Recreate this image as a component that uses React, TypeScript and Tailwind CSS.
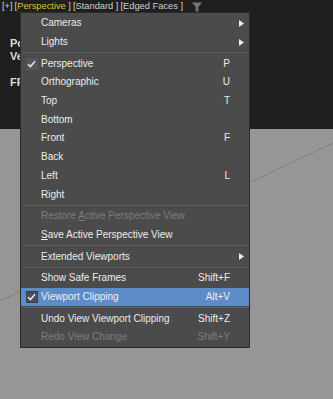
import React from "react";

type Item =
  | { sep: true }
  | {
      sep?: false;
      label: React.ReactNode;
      key?: string;
      sub?: boolean;
      checked?: boolean;
      disabled?: boolean;
      active?: boolean;
    };

const items: Item[] = [
  { label: "Cameras", sub: true },
  { label: "Lights", sub: true },
  { sep: true },
  { label: "Perspective", key: "P", checked: true },
  { label: "Orthographic", key: "U" },
  { label: "Top", key: "T" },
  { label: "Bottom" },
  { label: "Front", key: "F" },
  { label: "Back" },
  { label: "Left", key: "L" },
  { label: "Right" },
  { sep: true },
  {
    label: (
      <>
        Restore <span className="underline">A</span>ctive Perspective View
      </>
    ),
    disabled: true,
  },
  {
    label: (
      <>
        <span className="underline">S</span>ave Active Perspective View
      </>
    ),
  },
  { sep: true },
  { label: "Extended Viewports", sub: true },
  { sep: true },
  { label: "Show Safe Frames", key: "Shift+F" },
  { label: "Viewport Clipping", key: "Alt+V", checked: true, active: true },
  { sep: true },
  { label: "Undo View Viewport Clipping", key: "Shift+Z" },
  { label: "Redo View Change", key: "Shift+Y", disabled: true },
];

function Check({ active }: { active?: boolean }) {
  return (
    <div
      className={
        "w-[12px] h-[12px] flex items-center justify-center " +
        (active ? "bg-[#4a4f57] border border-[#3a3f47]" : "bg-[#555]")
      }
    >
      <svg width="9" height="8" viewBox="0 0 9 8">
        <path d="M1 4.2 L3.4 6.6 L8 1.2" fill="none" stroke="#e4e4e4" strokeWidth="1.6" />
      </svg>
    </div>
  );
}

function Menu() {
  return (
    <div className="absolute left-[20px] top-[12px] w-[230px] bg-[#4b4b4b] border border-[#2b2b2b] pt-[1px]">
      {items.map((it, i) =>
        it.sep ? (
          <div key={i} className="h-[3px] flex items-center pl-[2px] pr-[1px]">
            <div className="h-px w-full bg-[#5f5f5f]" />
          </div>
        ) : (
          <div
            key={i}
            className={
              "h-[18.7px] flex items-center pr-[19px] " +
              (it.active ? "bg-[#5d8cc9] " : "") +
              (it.disabled ? "text-[#7c7c7c]" : "text-[#ececec]")
            }
          >
            <div className="w-[20px] flex justify-center pl-[1px]">{it.checked && <Check active={it.active} />}</div>
            <span className="flex-1 whitespace-nowrap">{it.label}</span>
            {it.key && <span className="whitespace-nowrap">{it.key}</span>}
            {it.sub && (
              <svg width="5" height="7" viewBox="0 0 5 7" className="mr-[-14px] ml-auto">
                <polygon points="0,0 5,3.5 0,7" fill="#e6edf7" />
              </svg>
            )}
          </div>
        )
      )}
    </div>
  );
}

export default function App() {
  return (
    <div
      className="relative w-[333px] h-[399px] overflow-hidden bg-[#969696] text-[10px] leading-none"
      style={{ fontFamily: '"Liberation Sans", Arial, sans-serif' }}
    >
      <div className="h-[129px] bg-[#1f1f1f] flex flex-col">
        <div className="h-[13px] flex items-center pl-[2px] gap-[2px] text-[#cfcfcf] text-[9.3px]">
          <span>[+]</span>
          <span>
            [<span className="text-[#d9c531]">Perspective</span> ]
          </span>
          <span>[Standard ]</span>
          <span>[Edged Faces ]</span>
          <svg width="10" height="10" viewBox="0 0 11 10" className="ml-[7px]">
            <polygon points="0,0 11,0 7,5 7,10 4,10 4,5" fill="#777" />
          </svg>
        </div>
        <div className="pl-[10px] pt-[25px] font-bold text-[#dcdcdc] text-[11px] flex flex-col gap-[2px]">
          <span>Po</span>
          <span>Ve</span>
          <span className="mt-[13px]">FP</span>
        </div>
      </div>
      <svg className="absolute left-0 top-0" width="333" height="399">
        <line x1="0" y1="301" x2="333" y2="143" stroke="#7f7f7f" strokeWidth="1" />
      </svg>
      <Menu />
    </div>
  );
}
